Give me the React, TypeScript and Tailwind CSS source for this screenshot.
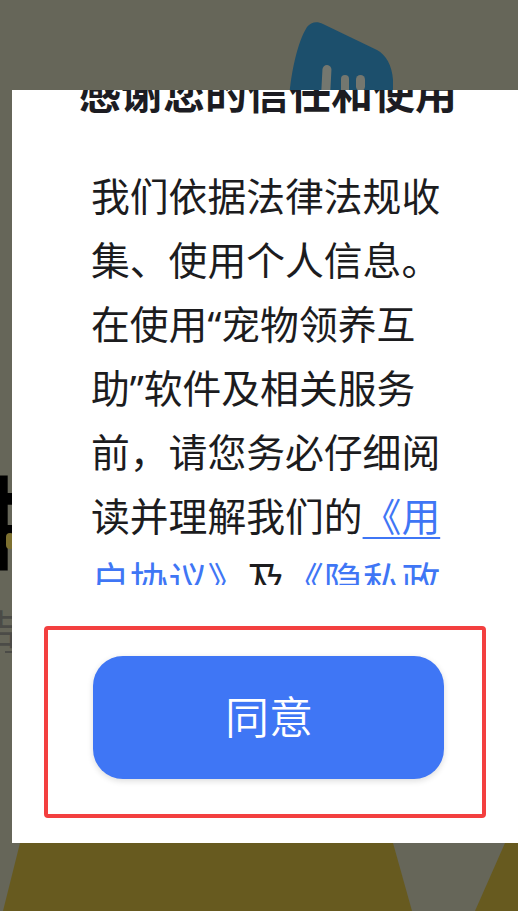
const bodyFont = { fontFamily: '"Noto Sans", "Noto Sans CJK SC", sans-serif' };

function Backdrop() {
  return (
    <div className="absolute inset-0 overflow-hidden bg-[#666659]">
      {/* logo behind the dialog */}
      <svg className="absolute left-[285px] top-[18px]" width="112" height="80" viewBox="0 0 112 80">
        <path d="M4 80C6 55 12 25 22 9C26 4 32 3 38 6L92 32C101 37 107 47 108 62V80Z" fill="#1c4f6c" />
        <rect x="37" y="47" width="9" height="40" rx="4.5" fill="#74776f" transform="rotate(3 41 60)" />
        <rect x="56" y="57" width="8" height="30" rx="4" fill="#74776f" />
        <rect x="71" y="57" width="9" height="16" rx="4.5" fill="#74776f" />
      </svg>
      {/* page headline peeking out on the left */}
      <div className="absolute left-[-50px] top-[467px] text-[100px] leading-[110px] font-bold text-black" style={bodyFont}>
        牛
      </div>
      <div className="absolute left-[6px] top-[533px] h-[16px] w-[8px] rounded-full bg-[#7d7030]" />
      <div className="absolute left-[-20px] top-[604px] text-[40px] leading-[50px] text-[#4b4b47]" style={bodyFont}>
        告
      </div>
      <div className="absolute left-[5px] top-[651px] h-[2px] w-[8px] bg-[#4b4b47]" />
      {/* bottom stripes */}
      <svg className="absolute bottom-0 left-0" width="518" height="68" viewBox="0 0 518 68">
        <path d="M3 68L20 0H393L412 68Z" fill="#675a1f" />
        <path d="M475 68L505 0H518V68Z" fill="#675a1f" />
      </svg>
    </div>
  );
}

export default function App() {
  return (
    <div className="relative flex h-[911px] w-[518px] overflow-hidden pt-[90px] pb-[68px] pl-[12px]" style={bodyFont}>
      <Backdrop />

      <div className="relative flex w-[506px] flex-col bg-white">
        <div className="h-[495px] overflow-hidden pr-[77px] pl-[79px] text-[#1c1c1e]">
          <h2 className="mt-[-29px] ml-[-12px] w-[400px] text-[42px] leading-[64px] font-bold whitespace-nowrap text-[#1c1c22]">
            感谢您的信任和使用
          </h2>
          <p className="mt-[39px] text-[38.8px] leading-[64px]">
            我们依据法律法规收集、使用个人信息。在使用“宠物领养互助”软件及相关服务前，请您务必仔细阅读并理解我们的
            <span className="text-[#3f76f5] underline underline-offset-[6px] decoration-[2px]">《用户协议》</span>
            及
            <span className="text-[#3f76f5]">《隐私政策》</span>
          </p>
        </div>

        <div className="mt-[41px] ml-[32px] flex h-[192px] w-[442px] items-center justify-center rounded-[4px] border-[4px] border-[#f33f3f] pb-[10px] pl-[6px]">
          <button className="flex h-[123px] w-[351px] items-center justify-center rounded-[30px] bg-[#3f76f5] pl-[2px] text-[44px] font-[350] text-white shadow-[0_2px_6px_rgba(0,0,0,0.14)]">
            同意
          </button>
        </div>
      </div>
    </div>
  );
}
